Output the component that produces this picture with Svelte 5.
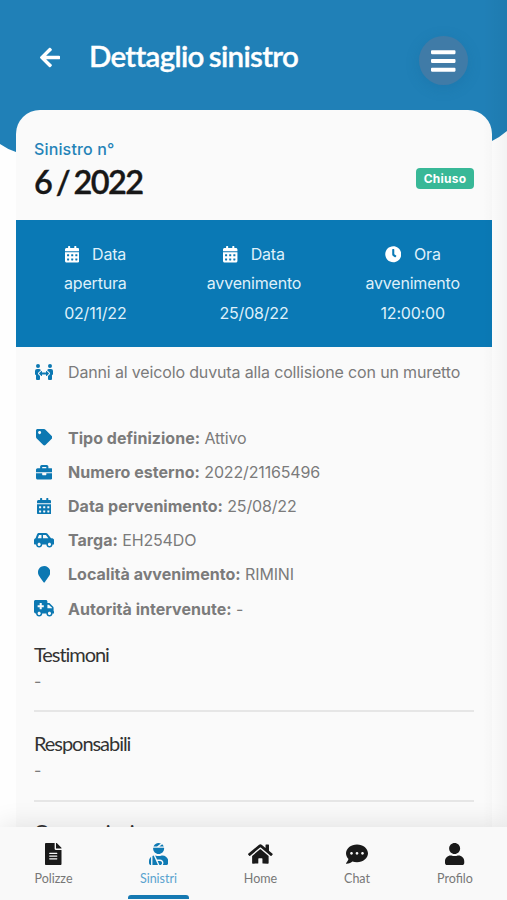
<script>
  const icons = {
    back: ['0 0 448 512', 'M257.5 445.1l-22.2 22.2c-9.4 9.4-24.6 9.4-33.9 0L7 273c-9.4-9.4-9.4-24.6 0-33.9L201.4 44.7c9.4-9.4 24.6-9.4 33.9 0l22.2 22.2c9.5 9.5 9.3 25-.4 34.3L136.6 216H424c13.3 0 24 10.7 24 24v32c0 13.3-10.7 24-24 24H136.6l120.5 114.8c9.8 9.3 10 24.8.4 34.3z'],
    bars: ['0 0 448 512', 'M16 132h416c8.8 0 16-7.2 16-16V76c0-8.8-7.2-16-16-16H16C7.2 60 0 67.2 0 76v40c0 8.800 7.200 16 16 16zm0 160h416c8.800 0 16-7.200 16-16v-40c0-8.800-7.200-16-16-16H16c-8.800 0-16 7.200-16 16v40c0 8.800 7.200 16 16 16zm0 160h416c8.800 0 16-7.200 16-16v-40c0-8.800-7.200-16-16-16H16c-8.800 0-16 7.200-16 16v40c0 8.800 7.200 16 16 16z'],
    calendar: ['0 0 448 512', 'M0 464c0 26.500 21.500 48 48 48h352c26.500 0 48-21.500 48-48V192H0v272zm320-196c0-6.600 5.400-12 12-12h40c6.600 0 12 5.400 12 12v40c0 6.600-5.400 12-12 12h-40c-6.600 0-12-5.400-12-12v-40zm0 128c0-6.600 5.400-12 12-12h40c6.600 0 12 5.400 12 12v40c0 6.600-5.400 12-12 12h-40c-6.600 0-12-5.400-12-12v-40zM192 268c0-6.600 5.400-12 12-12h40c6.600 0 12 5.400 12 12v40c0 6.600-5.400 12-12 12h-40c-6.600 0-12-5.400-12-12v-40zm0 128c0-6.600 5.400-12 12-12h40c6.600 0 12 5.400 12 12v40c0 6.600-5.400 12-12 12h-40c-6.600 0-12-5.400-12-12v-40zM64 268c0-6.600 5.400-12 12-12h40c6.600 0 12 5.400 12 12v40c0 6.600-5.400 12-12 12H76c-6.600 0-12-5.400-12-12v-40zm0 128c0-6.600 5.400-12 12-12h40c6.600 0 12 5.400 12 12v40c0 6.600-5.400 12-12 12H76c-6.600 0-12-5.400-12-12v-40zM400 64h-48V16c0-8.800-7.200-16-16-16h-32c-8.800 0-16 7.200-16 16v48H160V16c0-8.800-7.200-16-16-16h-32c-8.800 0-16 7.200-16 16v48H48C21.500 64 0 85.500 0 112v48h448v-48c0-26.500-21.500-48-48-48z'],
    clock: ['0 0 512 512', 'M256 8C119 8 8 119 8 256s111 248 248 248 248-111 248-248S393 8 256 8zm92.500 313l-20 25a16 16 0 0 1-22.500 2.500l-67-49.700a40 40 0 0 1-15-31.200V112a16 16 0 0 1 16-16h32a16 16 0 0 1 16 16v144l58 42.500a16 16 0 0 1 2.500 22.500z'],
    people: ['0 0 576 512', 'M96,128A64,64,0,1,0,32,64,64,64,0,0,0,96,128Zm0,176.080a44.110,44.110,0,0,1,13.640-32L181.770,204c1.650-1.550,3.770-2.310,5.610-3.570A63.910,63.910,0,0,0,128,160H64A64,64,0,0,0,0,224v96a32,32,0,0,0,32,32V480a32,32,0,0,0,32,32h64a32,32,0,0,0,32-32V383.610l-50.360-47.530A44.080,44.080,0,0,1,96,304.080ZM480,128a64,64,0,1,0-64-64A64,64,0,0,0,480,128Zm32,32H448a63.910,63.910,0,0,0-59.380,40.420c1.840,1.270,4,2,5.620,3.590l72.120,68.060a44.370,44.370,0,0,1,0,64L416,383.620V480a32,32,0,0,0,32,32h64a32,32,0,0,0,32-32V352a32,32,0,0,0,32-32V224A64,64,0,0,0,512,160ZM444.400,295.340l-72.120-68.060A12,12,0,0,0,352,236v36H224V236a12,12,0,0,0-20.280-8.730L131.600,295.340a12.400,12.400,0,0,0,0,17.470l72.120,68.070A12,12,0,0,0,224,372.140V336H352v36.140a12,12,0,0,0,20.280,8.740l72.120-68.070A12.400,12.400,0,0,0,444.400,295.340Z'],
    tag: ['0 0 512 512', 'M0 252.100V48C0 21.500 21.500 0 48 0h204.100a48 48 0 0 1 33.900 14.100l211.900 211.800c18.700 18.700 18.700 49.100 0 67.900L293.800 497.900c-18.700 18.700-49.100 18.700-67.900 0L14.100 286.100A48 48 0 0 1 0 252.100zM112 64c-26.500 0-48 21.500-48 48s21.500 48 48 48 48-21.500 48-48-21.500-48-48-48z'],
    briefcase: ['0 0 512 512', 'M320 336c0 8.840-7.160 16-16 16h-96c-8.840 0-16-7.160-16-16v-48H0v144c0 25.600 22.400 48 48 48h416c25.600 0 48-22.400 48-48V288H320v48zm144-208h-80V80c0-25.600-22.400-48-48-48H176c-25.600 0-48 22.400-48 48v48H48c-25.600 0-48 22.400-48 48v80h512v-80c0-25.600-22.400-48-48-48zm-144 0H192V96h128v32z'],
    car: ['0 0 640 512', 'M544 192h-16L419.220 56.020A64.025 64.025 0 0 0 369.240 32H155.330c-26.170 0-49.700 15.930-59.420 40.230L48 194.260C20.440 201.400 0 226.210 0 256v112c0 8.840 7.160 16 16 16h48c0 53.020 42.980 96 96 96s96-42.980 96-96h128c0 53.020 42.980 96 96 96s96-42.980 96-96h48c8.840 0 16-7.160 16-16v-80c0-53.020-42.980-96-96-96zM160 432c-26.470 0-48-21.530-48-48s21.530-48 48-48 48 21.530 48 48-21.530 48-48 48zm72-240H116.930l38.400-96H232v96zm48 0V96h89.240l76.800 96H280zm200 240c-26.470 0-48-21.530-48-48s21.530-48 48-48 48 21.530 48 48-21.530 48-48 48z'],
    marker: ['0 0 384 512', 'M172.268 501.670C26.970 291.031 0 269.413 0 192 0 85.961 85.961 0 192 0s192 85.961 192 192c0 77.413-26.970 99.031-172.268 309.670-9.535 13.774-29.930 13.773-39.464 0z'],
    ambulance: ['0 0 640 512', 'M624 352h-16V243.900c0-12.700-5.100-24.900-14.100-33.900L494 110.100c-9-9-21.200-14.100-33.900-14.100H416V48c0-26.500-21.500-48-48-48H48C21.500 0 0 21.500 0 48v320c0 26.500 21.500 48 48 48h16c0 53 43 96 96 96s96-43 96-96h128c0 53 43 96 96 96s96-43 96-96h48c8.800 0 16-7.200 16-16v-32c0-8.800-7.200-16-16-16zM160 464c-26.500 0-48-21.500-48-48s21.500-48 48-48 48 21.500 48 48-21.500 48-48 48zm144-248c0 4.400-3.600 8-8 8h-56v56c0 4.400-3.600 8-8 8h-48c-4.400 0-8-3.600-8-8v-56h-56c-4.400 0-8-3.600-8-8v-48c0-4.400 3.600-8 8-8h56v-56c0-4.400 3.600-8 8-8h48c4.400 0 8 3.600 8 8v56h56c4.400 0 8 3.600 8 8v48zm176 248c-26.500 0-48-21.500-48-48s21.500-48 48-48 48 21.500 48 48-21.500 48-48 48zm80-208H416V144h44.100l99.900 99.900V256z'],
    file: ['0 0 384 512', 'M224 136V0H24C10.700 0 0 10.700 0 24v464c0 13.300 10.700 24 24 24h336c13.300 0 24-10.700 24-24V160H248c-13.200 0-24-10.800-24-24zm64 236c0 6.600-5.400 12-12 12H108c-6.600 0-12-5.400-12-12v-8c0-6.600 5.400-12 12-12h168c6.600 0 12 5.400 12 12v8zm0-64c0 6.600-5.400 12-12 12H108c-6.600 0-12-5.400-12-12v-8c0-6.600 5.400-12 12-12h168c6.600 0 12 5.400 12 12v8zm0-72v8c0 6.600-5.400 12-12 12H108c-6.600 0-12-5.400-12-12v-8c0-6.600 5.400-12 12-12h168c6.600 0 12 5.400 12 12zm96-114.100v6.100H256V0h6.100c6.400 0 12.500 2.500 17 7l97.900 98c4.500 4.500 7 10.600 7 16.900z'],
    injured: ['0 0 448 512', 'M277.370 11.980C261.080 4.470 243.110 0 224 0c-53.690 0-99.500 33.130-118.510 80h81.190l90.690-68.020zM342.510 80c-7.900-19.470-20.670-36.200-36.490-49.520L239.990 80h102.520zM224 256c70.690 0 128-57.310 128-128 0-5.480-.950-10.700-1.610-16H97.610c-.670 5.300-1.610 10.520-1.610 16 0 70.690 57.310 128 128 128zM80 299.700V512h128.260l-98.450-221.520A132.835 132.835 0 0 0 80 299.700zM0 464c0 26.510 21.490 48 48 48V320.240C18.880 344.890 0 381.260 0 422.400V464zm256-48h-55.380l42.670 96H256c26.470 0 48-21.530 48-48s-21.530-48-48-48zm57.600-128h-16.710c-22.240 10.180-46.880 16-72.890 16s-50.650-5.820-72.890-16h-7.370l42.670 96H256c44.110 0 80 35.890 80 80 0 18.080-6.260 34.590-16.410 48H400c26.510 0 48-21.490 48-48v-41.600c0-74.230-60.170-134.400-134.400-134.400z'],
    home: ['0 0 576 512', 'M280.370 148.260L96 300.110V464a16 16 0 0 0 16 16l112.060-.290a16 16 0 0 0 15.920-16V368a16 16 0 0 1 16-16h64a16 16 0 0 1 16 16v95.640a16 16 0 0 0 16 16.050L464 480a16 16 0 0 0 16-16V300L295.670 148.260a12.190 12.190 0 0 0-15.300 0zM571.600 251.470L488 182.560V44.050a12 12 0 0 0-12-12h-56a12 12 0 0 0-12 12v72.610L318.470 43a48 48 0 0 0-61 0L4.340 251.470a12 12 0 0 0-1.600 16.900l25.500 31A12 12 0 0 0 45.150 301l235.220-193.740a12.190 12.190 0 0 1 15.300 0L530.900 301a12 12 0 0 0 16.900-1.600l25.500-31a12 12 0 0 0-1.700-16.930z'],
    chat: ['0 0 512 512', 'M256 32C114.600 32 0 125.100 0 240c0 49.600 21.400 95 57 130.700C44.500 421.100 2.700 466 2.200 466.500c-2.200 2.300-2.800 5.700-1.500 8.700S4.800 480 8 480c66.300 0 116-31.800 140.600-51.400 32.700 12.300 69 19.400 107.400 19.400 141.400 0 256-93.100 256-208S397.400 32 256 32zM128 272c-17.700 0-32-14.300-32-32s14.300-32 32-32 32 14.300 32 32-14.300 32-32 32zm128 0c-17.700 0-32-14.300-32-32s14.300-32 32-32 32 14.300 32 32-14.300 32-32 32zm128 0c-17.700 0-32-14.300-32-32s14.300-32 32-32 32 14.300 32 32-14.300 32-32 32z'],
    user: ['0 0 448 512', 'M224 256c70.700 0 128-57.300 128-128S294.700 0 224 0 96 57.300 96 128s57.300 128 128 128zm89.600 32h-16.700c-22.200 10.200-46.900 16-72.900 16s-50.600-5.800-72.900-16h-16.700C60.200 288 0 348.200 0 422.400V464c0 26.500 21.500 48 48 48h352c26.500 0 48-21.500 48-48v-41.600c0-74.200-60.200-134.400-134.400-134.400z']
  };

  const summary = [
    { icon: 'calendar', first: 'Data', second: 'apertura', value: '02/11/22' },
    { icon: 'calendar', first: 'Data', second: 'avvenimento', value: '25/08/22' },
    { icon: 'clock', first: 'Ora', second: 'avvenimento', value: '12:00:00' }
  ];

  const details = [
    { icon: 'tag', label: 'Tipo definizione:', value: 'Attivo' },
    { icon: 'briefcase', label: 'Numero esterno:', value: '2022/21165496' },
    { icon: 'calendar', label: 'Data pervenimento:', value: '25/08/22' },
    { icon: 'car', label: 'Targa:', value: 'EH254DO' },
    { icon: 'marker', label: 'Località avvenimento:', value: 'RIMINI' },
    { icon: 'ambulance', label: 'Autorità intervenute:', value: '-' }
  ];

  const sections = ['Testimoni', 'Responsabili', 'Osservazioni'];

  const tabs = [
    { icon: 'file', label: 'Polizze' },
    { icon: 'injured', label: 'Sinistri', active: true },
    { icon: 'home', label: 'Home' },
    { icon: 'chat', label: 'Chat' },
    { icon: 'user', label: 'Profilo' }
  ];
</script>

{#snippet icon(name, size)}
  <svg class="icon" viewBox={icons[name][0]} height={size} aria-hidden="true"><path d={icons[name][1]} /></svg>
{/snippet}

<div class="screen">
  <svg class="wave" viewBox="0 0 507 170" aria-hidden="true">
    <path d="M0 0H507V131Q500 137 492 141Q440 168 250 168Q60 168 16 152Q7 149 0 144Z" />
  </svg>

  <header>
    <span class="back">{@render icon('back', 23)}</span>
    <h1>Dettaglio sinistro</h1>
    <button class="menu" aria-label="Menu">{@render icon('bars', 28)}</button>
  </header>

  <main>
    <div class="heading">
      <div>
        <div class="caption">Sinistro n°</div>
        <div class="number">6 / 2022</div>
      </div>
      <span class="badge">Chiuso</span>
    </div>

    <div class="summary">
      {#each summary as item}
        <div class="cell">
          <div class="first">{@render icon(item.icon, 16.5)}<span>{item.first}</span></div>
          <div>{item.second}</div>
          <div>{item.value}</div>
        </div>
      {/each}
    </div>

    <div class="body">
      <div class="row description">
        <span class="slot">{@render icon('people', 16)}</span>
        <span class="text">Danni al veicolo duvuta alla collisione con un muretto</span>
      </div>
      {#each details as item}
        <div class="row">
          <span class="slot">{@render icon(item.icon, 16.5)}</span>
          <span class="text"><b>{item.label}</b> {item.value}</span>
        </div>
      {/each}
      {#each sections as title}
        <section>
          <h2>{title}</h2>
          <p>-</p>
        </section>
      {/each}
    </div>
  </main>

  <div class="edge"></div>

  <nav>
    {#each tabs as tab}
      <div class="tab" class:active={tab.active}>
        {@render icon(tab.icon, 22)}
        <span>{tab.label}</span>
      </div>
    {/each}
  </nav>
</div>

<style>
  :global(body) { background: #fff; }
  .screen {
    position: relative;
    box-sizing: border-box;
    width: 507px;
    height: 900px;
    overflow: hidden;
    background: #fefefe;
    color: #7b7b7b;
    font-family: Inter, 'Liberation Sans', sans-serif;
    font-size: 16px;
  }
  .icon { display: block; width: auto; fill: currentColor; flex: none; }
  .wave { position: absolute; top: 0; left: 0; width: 507px; height: 170px; fill: #2080b7; }
  header {
    position: relative;
    display: flex;
    align-items: center;
    box-sizing: border-box;
    height: 110px;
    padding: 9px 39px 0 40px;
    color: #fff;
  }
  .back { width: 49px; margin-bottom: 4px; }
  h1 {
    flex: 1;
    margin: 0 0 8px;
    font: 600 29.5px/36px Lato, sans-serif;
    letter-spacing: -0.7px;
    word-spacing: -1.5px;
    -webkit-text-stroke: 0.35px currentColor;
  }
  .menu {
    display: grid;
    place-items: center;
    width: 49px;
    height: 49px;
    margin: 2px 0 0;
    padding: 0;
    border: 0;
    border-radius: 50%;
    background: #407ba7;
    box-shadow: 0 3px 14px rgba(20, 90, 140, 0.22);
    color: #fff;
  }
  main {
    position: relative;
    width: 476px;
    height: 790px;
    margin-left: 16px;
    border-radius: 24px 24px 0 0;
    background: #fafafa;
  }
  .heading {
    display: flex;
    justify-content: space-between;
    box-sizing: border-box;
    height: 110px;
    padding: 28px 18px 0;
  }
  .caption { color: #2583b8; font-size: 16px; font-weight: 500; line-height: 22px; letter-spacing: 0.15px; }
  .number {
    margin-top: 2px;
    color: #171717;
    font: 600 32.5px/40px Lato, sans-serif;
    letter-spacing: -1.6px;
    word-spacing: -2px;
    -webkit-text-stroke: 0.35px currentColor;
  }
  .badge {
    width: 58px;
    height: 21px;
    margin-top: 30px;
    border-radius: 4px;
    background: #38b897;
    color: #fff;
    font-size: 12px;
    font-weight: 700;
    line-height: 21px;
    letter-spacing: 0.25px;
    text-align: center;
  }
  .summary {
    display: grid;
    grid-template-columns: repeat(3, 1fr);
    box-sizing: border-box;
    height: 127px;
    padding-top: 20px;
    background: #0a79b5;
    color: #dff0fa;
    line-height: 29.3px;
    letter-spacing: -0.2px;
    text-align: center;
  }
  .first { display: flex; align-items: center; justify-content: center; gap: 13px; }
  .first .icon { color: #fff; }
  .body { padding: 0 18px; }
  .row { display: flex; align-items: center; height: 34.2px; }
  .row.description { height: 49px; margin-bottom: 24.5px; }
  .slot { display: flex; justify-content: center; width: 20px; margin-right: 14px; color: #0c78b2; }
  .text { white-space: nowrap; letter-spacing: -0.15px; }
  b { font-weight: 700; letter-spacing: 0.03px; }
  section { height: 90px; box-sizing: border-box; border-bottom: 2px solid #e6e6e6; padding-top: 16px; }
  section:first-of-type { height: 86.5px; padding-top: 13px; }
  section:last-of-type { padding-top: 14px; }
  h2 { margin: 0; color: #333; font: 400 20px/30px Lato, sans-serif; letter-spacing: -1.05px; }
  p { margin: 0; line-height: 24px; }
  .edge {
    position: absolute;
    top: 0;
    right: 0;
    width: 24px;
    height: 900px;
    background: linear-gradient(90deg, transparent, rgba(0, 0, 0, 0.045));
  }
  nav {
    position: absolute;
    right: 0;
    bottom: 0;
    left: 0;
    display: grid;
    grid-template-columns: 107px 103px 101px 92px 104px;
    height: 73px;
    background: #f9f9f9;
    box-shadow: 0 -2px 26px rgba(0, 0, 0, 0.1);
  }
  .tab {
    position: relative;
    display: flex;
    flex-direction: column;
    align-items: center;
    padding-top: 16px;
    color: #1a1a1a;
  }
  .tab span { margin-top: 6px; color: #777; font: 400 12.5px/16px Lato, sans-serif; }
  .tab.active { color: #0f7ab4; }
  .tab.active span { color: #5aa3cf; }
  .tab.active::after {
    content: '';
    position: absolute;
    bottom: 1px;
    width: 61px;
    height: 4px;
    border-radius: 3px 3px 0 0;
    background: #1579b2;
  }
</style>
